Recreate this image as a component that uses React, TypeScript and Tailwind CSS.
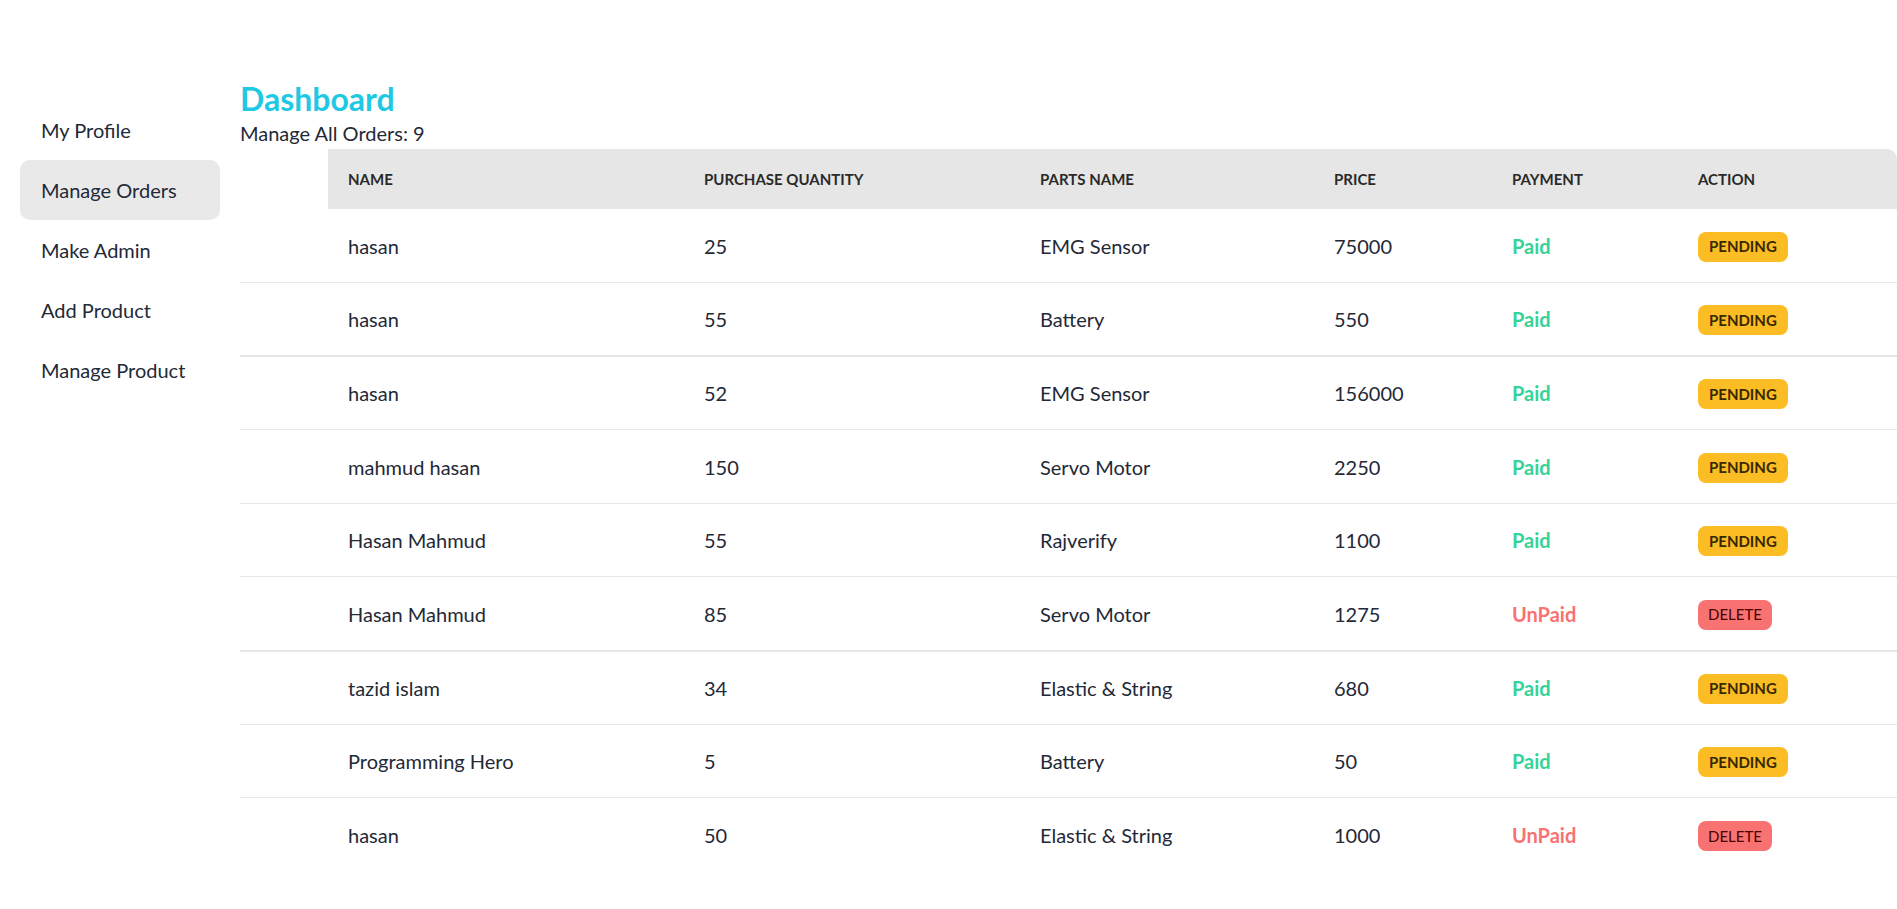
import React from 'react';

type Order = {
  name: string;
  quantity: number;
  part: string;
  price: number;
  paid: boolean;
};

const ORDERS: Order[] = [
  { name: 'hasan', quantity: 25, part: 'EMG Sensor', price: 75000, paid: true },
  { name: 'hasan', quantity: 55, part: 'Battery', price: 550, paid: true },
  { name: 'hasan', quantity: 52, part: 'EMG Sensor', price: 156000, paid: true },
  { name: 'mahmud hasan', quantity: 150, part: 'Servo Motor', price: 2250, paid: true },
  { name: 'Hasan Mahmud', quantity: 55, part: 'Rajverify', price: 1100, paid: true },
  { name: 'Hasan Mahmud', quantity: 85, part: 'Servo Motor', price: 1275, paid: false },
  { name: 'tazid islam', quantity: 34, part: 'Elastic & String', price: 680, paid: true },
  { name: 'Programming Hero', quantity: 5, part: 'Battery', price: 50, paid: true },
  { name: 'hasan', quantity: 50, part: 'Elastic & String', price: 1000, paid: false },
];

const MENU = ['My Profile', 'Manage Orders', 'Make Admin', 'Add Product', 'Manage Product'];

const HEADERS = ['Name', 'Purchase Quantity', 'Parts Name', 'Price', 'Payment', 'Action'];

// rows that show a slightly heavier divider in the reference
const THICK = [1, 5];

export default function App() {
  return (
    <div
      className="flex min-h-screen bg-white text-[#1f2937]"
      style={{ fontFamily: 'Lato, "Open Sans", sans-serif' }}
    >
      <aside className="w-[240px] shrink-0 px-5 pt-[100px]">
        <ul className="flex flex-col">
          {MENU.map((item) => (
            <li key={item}>
              <a
                className={`flex h-[60px] items-center rounded-[10px] px-[21px] text-[20px] ${
                  item === 'Manage Orders' ? 'bg-[#e9e9e9]' : ''
                }`}
              >
                {item}
              </a>
            </li>
          ))}
        </ul>
      </aside>

      <main className="flex-1 min-w-0">
        <h2 className="mt-[81px] text-[32px] font-bold leading-9 text-[#1fc9e4]">Dashboard</h2>
        <p className="text-[20px] leading-[32px]">Manage All Orders: {ORDERS.length}</p>

        <table className="w-full table-fixed border-collapse text-left">
          <colgroup>
            <col className="w-[88px]" />
            <col className="w-[356px]" />
            <col className="w-[336px]" />
            <col className="w-[294px]" />
            <col className="w-[178px]" />
            <col className="w-[186px]" />
            <col />
          </colgroup>
          <thead>
            <tr className="h-[60px]">
              <th className="bg-white" />
              {HEADERS.map((h, i) => (
                <th
                  key={h}
                  className={`bg-[#e6e6e6] px-5 text-[15px] font-bold uppercase text-[#2a2a2a] ${
                    i === HEADERS.length - 1 ? 'rounded-tr-[10px]' : ''
                  }`}
                >
                  {h}
                </th>
              ))}
            </tr>
          </thead>
          <tbody>
            {ORDERS.map((o, i) => (
              <tr
                key={i}
                className={`h-[73.6px] text-[20px] ${
                  i === ORDERS.length - 1
                    ? ''
                    : THICK.includes(i)
                    ? 'border-b-2 border-[#e5e6e6]'
                    : 'border-b border-[#e5e6e6]'
                }`}
              >
                <td />
                <td className="px-5 align-middle whitespace-nowrap">{o.name}</td>
                <td className="px-5 align-middle">{o.quantity}</td>
                <td className="px-5 align-middle whitespace-nowrap">{o.part}</td>
                <td className="px-5 align-middle">{o.price}</td>
                <td
                  className={`px-5 align-middle font-bold ${
                    o.paid ? 'text-[#36d399]' : 'text-[#f87272]'
                  }`}
                >
                  {o.paid ? 'Paid' : 'UnPaid'}
                </td>
                <td className="px-5 align-middle">
                  {o.paid ? (
                    <button className="inline-flex h-[30px] items-center rounded-[8px] bg-[#fbbd23] px-[11px] text-[15px] font-bold uppercase text-[#382800]">
                      Pending
                    </button>
                  ) : (
                    <button className="inline-flex h-[30px] items-center rounded-[8px] bg-[#f87272] px-[10px] text-[15px] uppercase text-[#470000]">
                      Delete
                    </button>
                  )}
                </td>
              </tr>
            ))}
          </tbody>
        </table>
      </main>
    </div>
  );
}
